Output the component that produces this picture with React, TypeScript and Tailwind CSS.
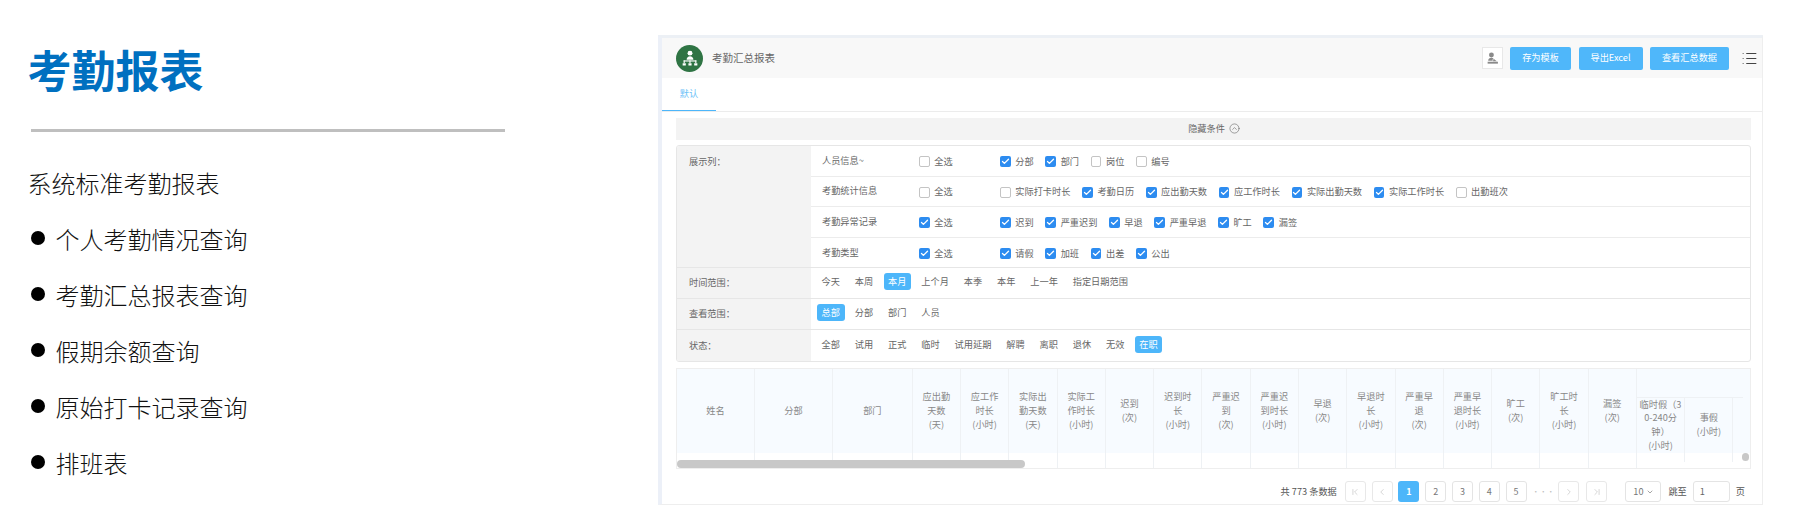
import React from 'react';
import {
  Check,
  ChevronDown,
  ChevronFirst,
  ChevronLast,
  ChevronLeft,
  ChevronRight,
  CircleChevronUp,
  List,
} from 'lucide-react';

const bullets = ['个人考勤情况查询', '考勤汇总报表查询', '假期余额查询', '原始打卡记录查询', '排班表'];

const checkRows = [
  {
    title: '人员信息~',
    all: false,
    items: [
      ['分部', true],
      ['部门', true],
      ['岗位', false],
      ['编号', false],
    ],
  },
  {
    title: '考勤统计信息',
    all: false,
    items: [
      ['实际打卡时长', false],
      ['考勤日历', true],
      ['应出勤天数', true],
      ['应工作时长', true],
      ['实际出勤天数', true],
      ['实际工作时长', true],
      ['出勤班次', false],
    ],
  },
  {
    title: '考勤异常记录',
    all: true,
    items: [
      ['迟到', true],
      ['严重迟到', true],
      ['早退', true],
      ['严重早退', true],
      ['旷工', true],
      ['漏签', true],
    ],
  },
  {
    title: '考勤类型',
    all: true,
    items: [
      ['请假', true],
      ['加班', true],
      ['出差', true],
      ['公出', true],
    ],
  },
] as { title: string; all: boolean; items: [string, boolean][] }[];

const optionRows = [
  { label: '时间范围：', active: '本月', items: ['今天', '本周', '本月', '上个月', '本季', '本年', '上一年', '指定日期范围'] },
  { label: '查看范围：', active: '总部', items: ['总部', '分部', '部门', '人员'] },
  { label: '状态：', active: '在职', items: ['全部', '试用', '正式', '临时', '试用延期', '解聘', '离职', '退休', '无效', '在职'] },
];

const wideCols = [
  { name: '姓名', width: 'w-[78px]' },
  { name: '分部', width: 'w-[78px]' },
  { name: '部门', width: 'w-[79.7px]' },
];

const narrowCols = [
  ['应出勤', '天数', '(天)'],
  ['应工作', '时长', '(小时)'],
  ['实际出', '勤天数', '(天)'],
  ['实际工', '作时长', '(小时)'],
  ['迟到', '(次)'],
  ['迟到时', '长', '(小时)'],
  ['严重迟', '到', '(次)'],
  ['严重迟', '到时长', '(小时)'],
  ['早退', '(次)'],
  ['早退时', '长', '(小时)'],
  ['严重早', '退', '(次)'],
  ['严重早', '退时长', '(小时)'],
  ['旷工', '(次)'],
  ['旷工时', '长', '(小时)'],
  ['漏签', '(次)'],
];

const CheckItem = ({ label, checked }: { label: string; checked: boolean }) => (
  <span className="flex items-center gap-[4.6px] whitespace-nowrap">
    {checked ? (
      <span className="flex h-[10.7px] w-[10.7px] items-center justify-center rounded-[2px] bg-[#2d8cf0]">
        <Check size={9} strokeWidth={3.5} color="#ffffff" />
      </span>
    ) : (
      <span className="h-[10.7px] w-[10.7px] rounded-[2px] border border-[#c4c4c4] bg-white" />
    )}
    <span>{label}</span>
  </span>
);

const HeadLines = ({ lines }: { lines: string[] }) => (
  <div className="flex flex-col items-center leading-[13.8px] whitespace-nowrap">
    {lines.map((line, i) => (
      <span key={i}>{line}</span>
    ))}
  </div>
);

const PageBtn = ({ children, active, faint }: { children: React.ReactNode; active?: boolean; faint?: boolean }) => (
  <span
    className={
      active
        ? 'flex h-[21px] w-[21px] items-center justify-center rounded-[3px] bg-[#4db6fa] text-[9px] font-bold text-white'
        : faint
          ? 'flex h-[21px] w-[21px] items-center justify-center rounded-[3px] border border-[#e8e8e8] text-[#b8b8b8]'
          : 'flex h-[21px] w-[21px] items-center justify-center rounded-[3px] border border-[#e4e4e4] text-[9px] text-[#777]'
    }
  >
    {children}
  </span>
);

const TopBtn = ({ label, width }: { label: string; width: string }) => (
  <span className={`flex h-[23px] items-center justify-center rounded-[2px] bg-[#4fb7fa] text-[9.2px] text-white ${width}`}>
    {label}
  </span>
);

export default function App() {
  return (
    <div className="flex h-[524px] w-[1795px] overflow-hidden bg-white font-['Noto_Sans_CJK_SC',sans-serif]">
      <div className="w-[658px] shrink-0 pl-[27.5px]">
        <h1 className="mt-[37px] text-[44px] leading-[64px] font-bold text-[#0070c0]">考勤报表</h1>
        <div className="mt-[28px] ml-[3.5px] h-[3px] w-[474px] bg-[#bfbfbf]" />
        <p className="mt-[33px] text-[24px] leading-[36px] font-light text-[#111]">系统标准考勤报表</p>
        <ul className="mt-[20px] flex flex-col gap-[20px]">
          {bullets.map((b) => (
            <li key={b} className="flex h-[36px] items-center gap-[11px] text-[24px] leading-[36px] font-light text-[#111]">
              <span className="ml-[3.5px] h-[13.5px] w-[13.5px] -translate-y-[1px] rounded-full bg-black" />
              <span>{b}</span>
            </li>
          ))}
        </ul>
      </div>

      <div className="mt-[35px] flex h-[470px] w-[1105px] shrink-0 flex-col border-t-[3px] border-r border-b border-l-4 border-t-[#ecf0f5] border-r-[#eeeeee] border-b-[#eeeeee] border-l-[#ecf0f8] text-[9.2px] text-[#666]">
        <div className="flex h-[40px] items-center bg-[#f8f8f8] pr-[4px] pl-[14px]">
          <span className="flex h-[27px] w-[27px] items-center justify-center rounded-full bg-[#2f7444]">
            <svg viewBox="0 0 24 24" className="h-[18px] w-[18px]" fill="#ffffff">
              <circle cx="12" cy="5.5" r="3.3" />
              <path d="M7.5 14.2c0-3 2-4.6 4.5-4.6s4.5 1.6 4.5 4.6z" />
              <rect x="3.5" y="15.2" width="17" height="1.5" />
              <rect x="3.5" y="15.2" width="1.5" height="3.5" />
              <rect x="11.2" y="15.2" width="1.5" height="3.5" />
              <rect x="19" y="15.2" width="1.5" height="3.5" />
              <rect x="2.2" y="19" width="4.2" height="3" />
              <rect x="9.9" y="19" width="4.2" height="3" />
              <rect x="17.6" y="19" width="4.2" height="3" />
            </svg>
          </span>
          <span className="ml-[9px] text-[10.5px] text-[#666]">考勤汇总报表</span>
          <div className="ml-auto flex items-center">
            <span className="flex h-[22px] w-[21px] items-center justify-center border border-[#e8e8e8] bg-white">
              <svg viewBox="0 0 24 24" className="h-[13px] w-[13px]" fill="#8a8a8a">
                <circle cx="10" cy="5.500" r="4.500" />
                <path d="M4 16c0-3.500 2.500-5.500 6-5.500 1.500 0 2.800.4 3.800 1.200L11.500 15l2.500 1z" />
                <path d="M14 12.500l6 4.500H13z" />
                <rect x="3" y="18" width="19" height="3.500" />
              </svg>
            </span>
            <div className="ml-[7px] flex items-center gap-[7.500px]">
              <TopBtn label="存为模板" width="w-[61px]" />
              <TopBtn label="导出Excel" width="w-[64px]" />
              <TopBtn label="查看汇总数据" width="w-[79px]" />
            </div>
            <List size={17} strokeWidth={1.6} color="#444" className="ml-[12px]" />
          </div>
        </div>

        <div className="flex h-[34px] border-b border-[#ececec] bg-white">
          <span className="flex w-[54px] items-center justify-center border-b-[1.5px] border-[#4db6fa] text-[#6cc2f7]">默认</span>
        </div>

        <div className="flex flex-1 flex-col pt-[6px] pr-[11px] pl-[14px]">
          <div className="flex h-[21.500px] items-center justify-center gap-[4px] bg-[#f3f3f3] pl-[1px]">
            <span>隐藏条件</span>
            <CircleChevronUp size={11} strokeWidth={1.3} color="#666" />
          </div>

          <div className="mt-[5.500px] h-[217px] overflow-hidden rounded-[3px] border border-[#e6e6e6]">
            <div className="flex h-[122px] border-b border-[#e6e6e6]">
              <div className="w-[134px] shrink-0 bg-[#f3f3f3] pt-[9px] pl-[12px]">展示列：</div>
              <div className="flex-1">
                {checkRows.map((row, i) => (
                  <div
                    key={row.title}
                    className={
                      i < 3
                        ? 'flex h-[30.500px] items-center border-b border-[#ececec] pt-[2px] pl-[11px]'
                        : 'flex h-[30px] items-center pt-[2px] pl-[11px]'
                    }
                  >
                    <span className="w-[97px] shrink-0 -translate-y-[1px]">{row.title}</span>
                    <span className="w-[81px] shrink-0">
                      <CheckItem label="全选" checked={row.all} />
                    </span>
                    <div className="flex items-center gap-[11.700px]">
                      {row.items.map(([label, checked]) => (
                        <CheckItem key={label} label={label} checked={checked} />
                      ))}
                    </div>
                  </div>
                ))}
              </div>
            </div>
            {optionRows.map((row, i) => (
              <div
                key={row.label}
                className={i < 2 ? 'flex h-[31px] border-b border-[#e6e6e6]' : 'flex h-[32px]'}
              >
                <div className="flex w-[134px] shrink-0 items-center bg-[#f3f3f3] pl-[12px]">{row.label}</div>
                <div className="flex flex-1 items-center gap-[5.700px] pb-[3px] pl-[6px]">
                  {row.items.map((item) =>
                    item === row.active ? (
                      <span
                        key={item}
                        className="flex h-[16.500px] items-center rounded-[3px] bg-[#4db6fa] px-[4.600px] text-white"
                      >
                        {item}
                      </span>
                    ) : (
                      <span key={item} className="flex h-[16.500px] items-center px-[4.600px]">
                        {item}
                      </span>
                    ),
                  )}
                </div>
              </div>
            ))}
          </div>

          <div className="relative mt-[6px] h-[101px] overflow-hidden border border-[#eeeeee] text-[#888]">
            <div className="absolute inset-x-0 top-0 h-[84px] bg-[#f7fbff]" />
            <div className="relative flex h-full">
              {wideCols.map((col) => (
                <div key={col.name} className={`${col.width} shrink-0 border-r border-[#eef1f4] pb-[16px]`}>
                  <div className="flex h-[84px] items-center justify-center">{col.name}</div>
                </div>
              ))}
              {narrowCols.map((lines, i) => (
                <div key={i} className="w-[48.290px] shrink-0 border-r border-[#eef1f4] pb-[16px]">
                  <div className="flex h-[84px] items-center justify-center">
                    <HeadLines lines={lines} />
                  </div>
                </div>
              ))}
              <div className="flex w-[106px] shrink-0 flex-col">
                <div className="h-[28.500px] shrink-0 border-b border-[#eef1f4]" />
                <div className="flex h-[64px]">
                  <div className="flex h-[64px] w-[48.290px] shrink-0 flex-col border-r border-[#eef1f4]">
                    <div className="flex h-[55.500px] items-center justify-center">
                      <HeadLines lines={['临时假（3', '0-240分', '钟）', '(小时)']} />
                    </div>
                  </div>
                  <div className="flex h-[64px] w-[48.290px] shrink-0 flex-col border-r border-[#eef1f4]">
                    <div className="flex h-[55.500px] items-center justify-center">
                      <HeadLines lines={['事假', '(小时)']} />
                    </div>
                  </div>
                </div>
              </div>
            </div>
            <div className="absolute bottom-0 left-0 h-[8px] w-[348px] rounded-full bg-[#c8c8c8]" />
            <div className="absolute right-[1px] bottom-[7.500px] h-[7.500px] w-[7.500px] rounded-full bg-[#c8c8c8]" />
          </div>

          <div className="mt-[12px] flex h-[21px] items-center justify-end pr-[6px] text-[#555]">
            <span className="mr-[8px]">共 773 条数据</span>
            <div className="flex items-center gap-[5.800px]">
              <PageBtn faint>
                <ChevronFirst size={10} strokeWidth={1.4} />
              </PageBtn>
              <PageBtn faint>
                <ChevronLeft size={10} strokeWidth={1.4} />
              </PageBtn>
              <PageBtn active>1</PageBtn>
              <PageBtn>2</PageBtn>
              <PageBtn>3</PageBtn>
              <PageBtn>4</PageBtn>
              <PageBtn>5</PageBtn>
              <span className="w-[20px] text-center text-[7px] tracking-[0.5px] text-[#bdbdbd]">•••</span>
              <PageBtn faint>
                <ChevronRight size={10} strokeWidth={1.4} />
              </PageBtn>
              <span className="ml-[1.500px]">
                <PageBtn faint>
                  <ChevronLast size={10} strokeWidth={1.4} />
                </PageBtn>
              </span>
            </div>
            <span className="ml-[18px] flex h-[21px] w-[36px] items-center justify-center gap-[2px] rounded-[3px] border border-[#e4e4e4] text-[#777]">
              10
              <ChevronDown size={8} strokeWidth={2} />
            </span>
            <span className="ml-[7px]">跳至</span>
            <span className="ml-[6px] flex h-[21px] w-[37px] items-center rounded-[3px] border border-[#e4e4e4] pl-[6px] text-[#666]">
              1
            </span>
            <span className="ml-[6px]">页</span>
          </div>
        </div>
      </div>
    </div>
  );
}
